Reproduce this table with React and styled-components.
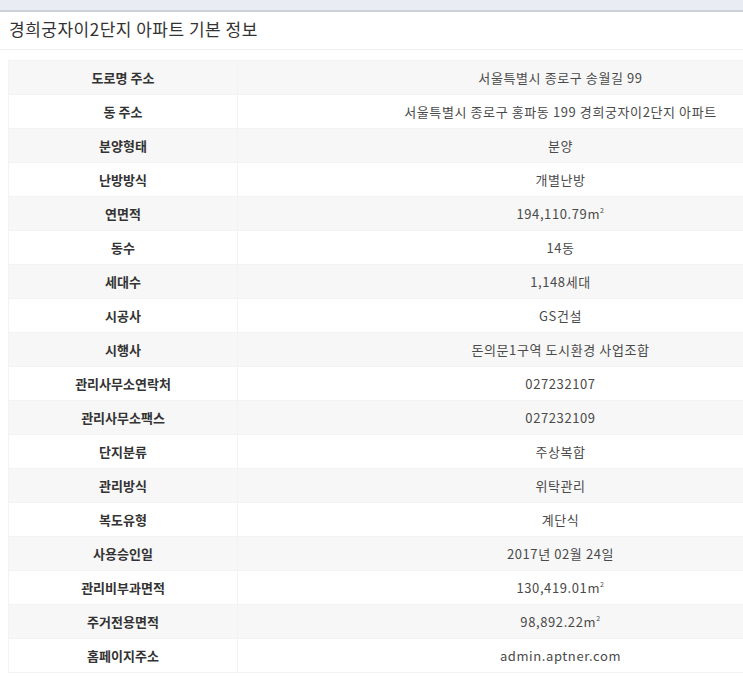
import styled, { createGlobalStyle } from "styled-components";

const GlobalStyle = createGlobalStyle`
  html, body {
    margin: 0;
    padding: 0;
    background: #fff;
    overflow: hidden;
    font-family: "Noto Sans CJK KR", "Noto Sans", sans-serif;
  }
`;

const TopBar = styled.div`
  height: 10px;
  background-color: #e9ecf2;
  border-bottom: 2px solid #cdd1d8;
`;

const Title = styled.h2`
  margin: 0;
  padding: 0 0 0 9px;
  height: 37px;
  line-height: 33px;
  font-size: 17px;
  font-weight: 400;
  color: #333;
  border-bottom: 1px solid #eeeeee;
  letter-spacing: 0.5px;
`;

const Wrap = styled.div`
  padding: 10px 0 0 8px;
  width: 880px;
`;

const Table = styled.table`
  width: 876px;
  border-collapse: collapse;
  table-layout: fixed;
  border: 1px solid #f3f3f3;
`;

const Row = styled.tr`
  background-color: ${(p) => (p.$odd ? "#f7f7f7" : "#ffffff")};
`;

const Head = styled.th`
  width: 228px;
  height: 33px;
  padding: 0;
  font-size: 13px;
  font-weight: 700;
  color: #333;
  text-align: center;
  border: 1px solid #f3f3f3;
`;

const Cell = styled.td`
  height: 33px;
  padding: 0;
  font-size: 13px;
  letter-spacing: 0.6px;
  color: #4a4a4a;
  text-align: center;
  border: 1px solid #f3f3f3;
`;

const Sup = styled.sup`
  font-size: 7px;
  vertical-align: 6px;
`;

const m2 = (
  <>
    m<Sup>2</Sup>
  </>
);

const rows = [
  ["도로명 주소", "서울특별시 종로구 송월길 99"],
  ["동 주소", "서울특별시 종로구 홍파동 199 경희궁자이2단지 아파트"],
  ["분양형태", "분양"],
  ["난방방식", "개별난방"],
  ["연면적", <>194,110.79{m2}</>],
  ["동수", "14동"],
  ["세대수", "1,148세대"],
  ["시공사", "GS건설"],
  ["시행사", "돈의문1구역 도시환경 사업조합"],
  ["관리사무소연락처", "027232107"],
  ["관리사무소팩스", "027232109"],
  ["단지분류", "주상복합"],
  ["관리방식", "위탁관리"],
  ["복도유형", "계단식"],
  ["사용승인일", "2017년 02월 24일"],
  ["관리비부과면적", <>130,419.01{m2}</>],
  ["주거전용면적", <>98,892.22{m2}</>],
  ["홈페이지주소", "admin.aptner.com"],
];

export default function App() {
  return (
    <>
      <GlobalStyle />
      <TopBar />
      <Title>경희궁자이2단지 아파트 기본 정보</Title>
      <Wrap>
        <Table>
          <tbody>
            {rows.map(([label, value], i) => (
              <Row key={label} $odd={i % 2 === 0}>
                <Head>{label}</Head>
                <Cell>{value}</Cell>
              </Row>
            ))}
          </tbody>
        </Table>
      </Wrap>
    </>
  );
}
